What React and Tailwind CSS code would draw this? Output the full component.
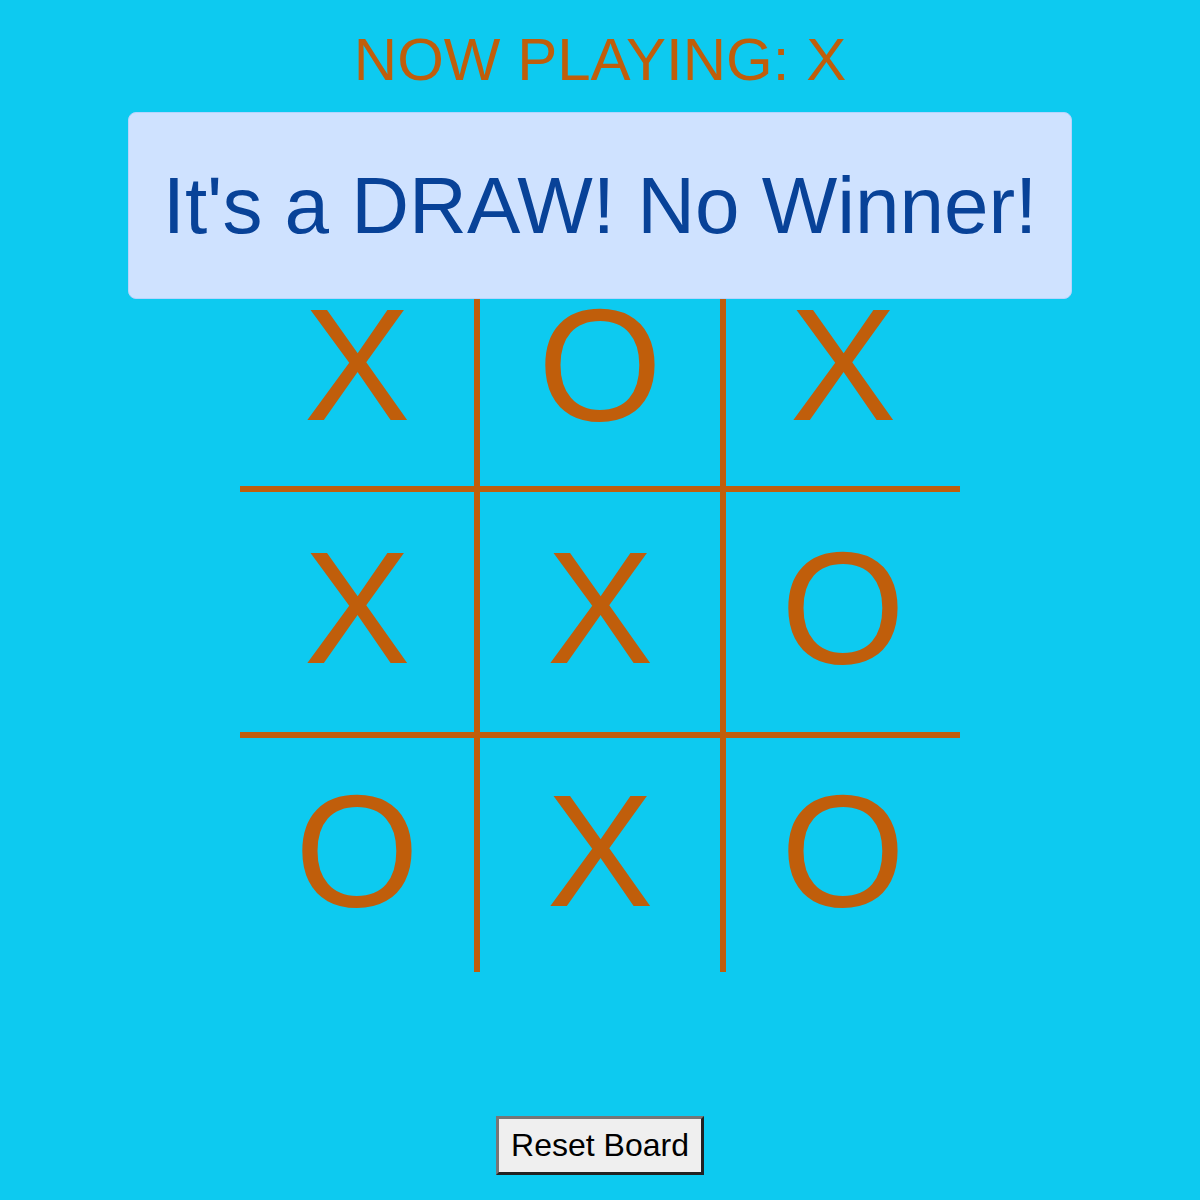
const board = ['X', 'O', 'X', 'X', 'X', 'O', 'O', 'X', 'O']

const cellBorders = [
  'border-r-[6px] border-b-[6px]',
  'border-b-[6px]',
  'border-l-[6px] border-b-[6px]',
  'border-r-[6px]',
  '',
  'border-l-[6px]',
  'border-r-[6px] border-t-[6px]',
  'border-t-[6px]',
  'border-l-[6px] border-t-[6px]',
]

const App = () => {
  return (
    <div
      className="relative min-h-screen w-full bg-[#0dcaf0] flex flex-col items-center"
      style={{ fontFamily: '"Liberation Sans", Arial, sans-serif' }}
    >
      <h1 className="mt-[25px] text-[60px] leading-[69px] text-[#c05e0b]">NOW PLAYING: X</h1>

      <div className="mt-[158px] grid grid-cols-3 w-[720px]">
        {board.map((v, i) => (
          <div
            key={i}
            className={`h-[240px] flex items-center justify-center pb-[8px] border-[#c05e0b] ${cellBorders[i]}`}
          >
            <span className="text-[160px] leading-none text-[#c05e0b]">{v}</span>
          </div>
        ))}
      </div>

      <button className="mt-[144px] px-3 py-2 text-[32px] leading-[37px] text-black bg-[#efefef] border-[3px] border-t-[#767676] border-l-[#767676] border-r-[#222222] border-b-[#222222]">
        Reset Board
      </button>

      <div className="absolute top-[112px] left-[128px] w-[944px] h-[187px] flex items-center justify-center bg-[#cfe2ff] border border-[#b6d4fe] rounded-lg">
        <span className="text-[80px] leading-[92px] text-[#084298]">It's a DRAW! No Winner!</span>
      </div>
    </div>
  )
}

export default App
